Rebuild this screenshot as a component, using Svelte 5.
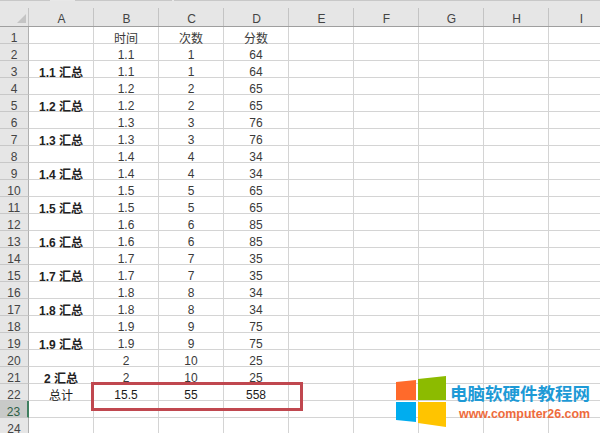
<script lang="ts">
  const cols = ["A", "B", "C", "D", "E", "F", "G", "H", "I"];

  const rows: { a?: string; vals?: (string | number)[]; bold?: boolean; total?: boolean }[] = [
    { vals: ["时间", "次数", "分数"] },
    { vals: ["1.1", 1, 64] },
    { a: "1.1 汇总", bold: true, vals: ["1.1", 1, 64] },
    { vals: ["1.2", 2, 65] },
    { a: "1.2 汇总", bold: true, vals: ["1.2", 2, 65] },
    { vals: ["1.3", 3, 76] },
    { a: "1.3 汇总", bold: true, vals: ["1.3", 3, 76] },
    { vals: ["1.4", 4, 34] },
    { a: "1.4 汇总", bold: true, vals: ["1.4", 4, 34] },
    { vals: ["1.5", 5, 65] },
    { a: "1.5 汇总", bold: true, vals: ["1.5", 5, 65] },
    { vals: ["1.6", 6, 85] },
    { a: "1.6 汇总", bold: true, vals: ["1.6", 6, 85] },
    { vals: ["1.7", 7, 35] },
    { a: "1.7 汇总", bold: true, vals: ["1.7", 7, 35] },
    { vals: ["1.8", 8, 34] },
    { a: "1.8 汇总", bold: true, vals: ["1.8", 8, 34] },
    { vals: ["1.9", 9, 75] },
    { a: "1.9 汇总", bold: true, vals: ["1.9", 9, 75] },
    { vals: ["2", 10, 25] },
    { a: "2 汇总", bold: true, vals: ["2", 10, 25] },
    { a: "总计", total: true, vals: ["15.5", 55, 558] },
    {},
    {},
  ];
</script>

<div class="sheet">
  <div class="topbar"></div>
  <div class="grid">
    <div class="corner"><span class="tri"></span></div>
    {#each cols as c}
      <div class="colhead">{c}</div>
    {/each}

    {#each rows as r, i}
      <div class="rowhead" class:active={i === 22}>{i + 1}</div>
      <div class="cell" class:bold={r.bold} class:total={r.total}>{r.a ?? ""}</div>
      {#each [0, 1, 2] as k}
        <div class="cell" class:total={r.total}>{r.vals ? r.vals[k] : ""}</div>
      {/each}
      {#each [0, 1, 2, 3, 4] as _}
        <div class="cell"></div>
      {/each}
    {/each}
  </div>

  <div class="highlight"></div>

  <div class="logo">
    <svg width="50" height="52" viewBox="0 0 50 52">
      <polygon points="0,6 20,4 20,24 0,24" fill="#ff6a2b" />
      <polygon points="22,3 50,0 50,24 22,24" fill="#8cbb00" />
      <polygon points="0,26 20,26 20,46 0,44" fill="#00adef" />
      <polygon points="22,26 50,26 50,51 22,47" fill="#ffc400" />
    </svg>
    <div class="brand">
      <div class="cn">电脑软硬件教程网</div>
      <div class="url">www.computer26.com</div>
    </div>
  </div>
</div>

<style>
  :global(body) {
    margin: 0;
    background: #fff;
  }

  .sheet {
    position: relative;
    width: 600px;
    height: 433px;
    overflow: hidden;
    font-family: "Liberation Sans", "Noto Sans CJK SC", sans-serif;
    font-size: 12px;
    color: #333;
  }

  /* sheet tab edge: the lighter gaps are the tabs cut off by the crop */
  .topbar {
    height: 2px;
    background: linear-gradient(
      to right,
      #c8c8c8 50px,
      #e8e8e8 50px,
      #e8e8e8 75px,
      #c8c8c8 75px,
      #c8c8c8 172px,
      #e8e8e8 172px,
      #e8e8e8 174px,
      #c8c8c8 174px
    );
  }

  .grid {
    display: grid;
    grid-template-columns: 29px repeat(9, 65px);
    grid-template-rows: 26px repeat(24, 17px);
    margin-top: -1px;
  }

  .corner,
  .colhead {
    background: linear-gradient(#c4c4c4, #c4c4c4) right bottom / 1px 18px no-repeat, #e6e6e6;
    border-bottom: 1px solid #9f9f9f;
    box-sizing: border-box;
  }

  .corner {
    position: relative;
  }

  .tri {
    position: absolute;
    right: 3px;
    bottom: 3px;
    width: 0;
    height: 0;
    border-left: 9px solid transparent;
    border-bottom: 9px solid #c4c4c4;
  }

  .colhead {
    display: flex;
    align-items: flex-end;
    justify-content: center;
    color: #444;
  }

  .rowhead {
    display: flex;
    align-items: center;
    justify-content: center;
    padding-top: 5px;
    box-sizing: border-box;
    background: #e6e6e6;
    border-right: 1px solid #b0b0b0;
    border-bottom: 1px solid #c8c8c8;
    color: #444;
  }

  .rowhead.active {
    background: #c8cac8;
    border-right: 2px solid #3f7f5f;
    color: #2f5f46;
  }

  .cell {
    display: flex;
    align-items: center;
    justify-content: center;
    padding-top: 5px;
    box-sizing: border-box;
    border-right: 1px solid #d4d4d4;
    border-bottom: 1px solid #d4d4d4;
    white-space: nowrap;
    color: #3a3a3a;
  }

  .bold {
    font-weight: 700;
    color: #222;
  }

  .total {
    color: #1a1a1a;
  }

  .highlight {
    position: absolute;
    left: 91px;
    top: 382px;
    width: 212px;
    height: 29px;
    box-sizing: border-box;
    border: 3px solid #c0474f;
  }

  .logo {
    position: absolute;
    left: 396px;
    top: 376px;
    display: flex;
    gap: 4px;
  }

  .brand {
    padding-top: 8px;
  }

  .cn {
    font-size: 17.5px;
    line-height: 20px;
    font-weight: 700;
    color: #1e9ad6;
    white-space: nowrap;
  }

  .url {
    margin-top: 3px;
    padding-left: 9px;
    font-size: 12.4px;
    line-height: 14px;
    font-weight: 700;
    color: #ee6b3c;
    white-space: nowrap;
  }
</style>
